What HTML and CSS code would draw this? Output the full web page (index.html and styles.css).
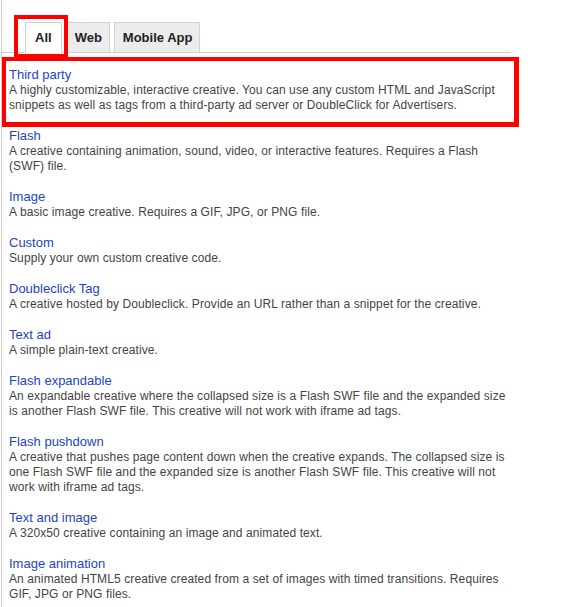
FILE: index.html
```html
<!DOCTYPE html>
<html>
<head>
<meta charset="utf-8">
<link rel="stylesheet" href="styles.css">
</head>
<body>
<div class="panel">
  <div class="tabs">
    <div class="tab active">All</div>
    <div class="tab">Web</div>
    <div class="tab">Mobile App</div>
  </div>
  <ul class="list">
    <li class="item"><a class="title">Third party</a><p class="desc">A highly customizable, interactive creative. You can use any custom HTML and JavaScript snippets as well as tags from a third-party ad server or DoubleClick for Advertisers.</p></li>
    <li class="item"><a class="title">Flash</a><p class="desc">A creative containing animation, sound, video, or interactive features. Requires a Flash (SWF) file.</p></li>
    <li class="item"><a class="title">Image</a><p class="desc">A basic image creative. Requires a GIF, JPG, or PNG file.</p></li>
    <li class="item"><a class="title">Custom</a><p class="desc">Supply your own custom creative code.</p></li>
    <li class="item"><a class="title">Doubleclick Tag</a><p class="desc">A creative hosted by Doubleclick. Provide an URL rather than a snippet for the creative.</p></li>
    <li class="item"><a class="title">Text ad</a><p class="desc">A simple plain-text creative.</p></li>
    <li class="item"><a class="title">Flash expandable</a><p class="desc">An expandable creative where the collapsed size is a Flash SWF file and the expanded size is another Flash SWF file. This creative will not work with iframe ad tags.</p></li>
    <li class="item"><a class="title">Flash pushdown</a><p class="desc">A creative that pushes page content down when the creative expands. The collapsed size is one Flash SWF file and the expanded size is another Flash SWF file. This creative will not work with iframe ad tags.</p></li>
    <li class="item"><a class="title">Text and image</a><p class="desc">A 320x50 creative containing an image and animated text.</p></li>
    <li class="item"><a class="title">Image animation</a><p class="desc">An animated HTML5 creative created from a set of images with timed transitions. Requires GIF, JPG or PNG files.</p></li>
  </ul>
  <div class="mark mark-tab"></div>
  <div class="mark mark-item"></div>
</div>
</body>
</html>
```

FILE: styles.css
```css
html, body {
  margin: 0;
  padding: 0;
  background: #fff;
}
body {
  font-family: "Liberation Sans", Arial, Helvetica, sans-serif;
  color: #444;
}
.panel {
  position: relative;
  margin-left: 1px;
  width: 509px;
  min-height: 607px;
  border-left: 1px solid #cfcfcf;
}
.tabs {
  display: flex;
  gap: 4px;
  padding: 22px 0 0 23px;
  border-bottom: 1px solid #cfcfcf;
  height: 30px;
  box-sizing: content-box;
}
.tab {
  box-sizing: border-box;
  height: 31px;
  margin-bottom: -1px;
  padding: 0 7px 0 8px;
  border: 1px solid #d0d0d0;
  background: #ececec;
  font-weight: bold;
  font-size: 13px;
  line-height: 30px;
  color: #222;
}
.tab.active {
  background: #fff;
  border-bottom-color: #fff;
  padding: 0 9px;
}
.list {
  list-style: none;
  margin: 0;
  padding: 14px 0 0 7px;
}
.item {
  margin-bottom: 15px;
}
.title {
  display: block;
  font-size: 13px;
  line-height: 16px;
  color: #1d45c2;
}
.desc {
  margin: 0;
  font-size: 12px;
  line-height: 15px;
  letter-spacing: 0.1px;
  color: #444;
}
.mark {
  position: absolute;
  border: 4px solid #ff0000;
  box-sizing: border-box;
}
.mark-tab {
  left: 12px;
  top: 15px;
  width: 54px;
  height: 43px;
}
.mark-item {
  left: 0;
  top: 57px;
  width: 517px;
  height: 70px;
  border-width: 4px 5px 5px 4px;
}
```
